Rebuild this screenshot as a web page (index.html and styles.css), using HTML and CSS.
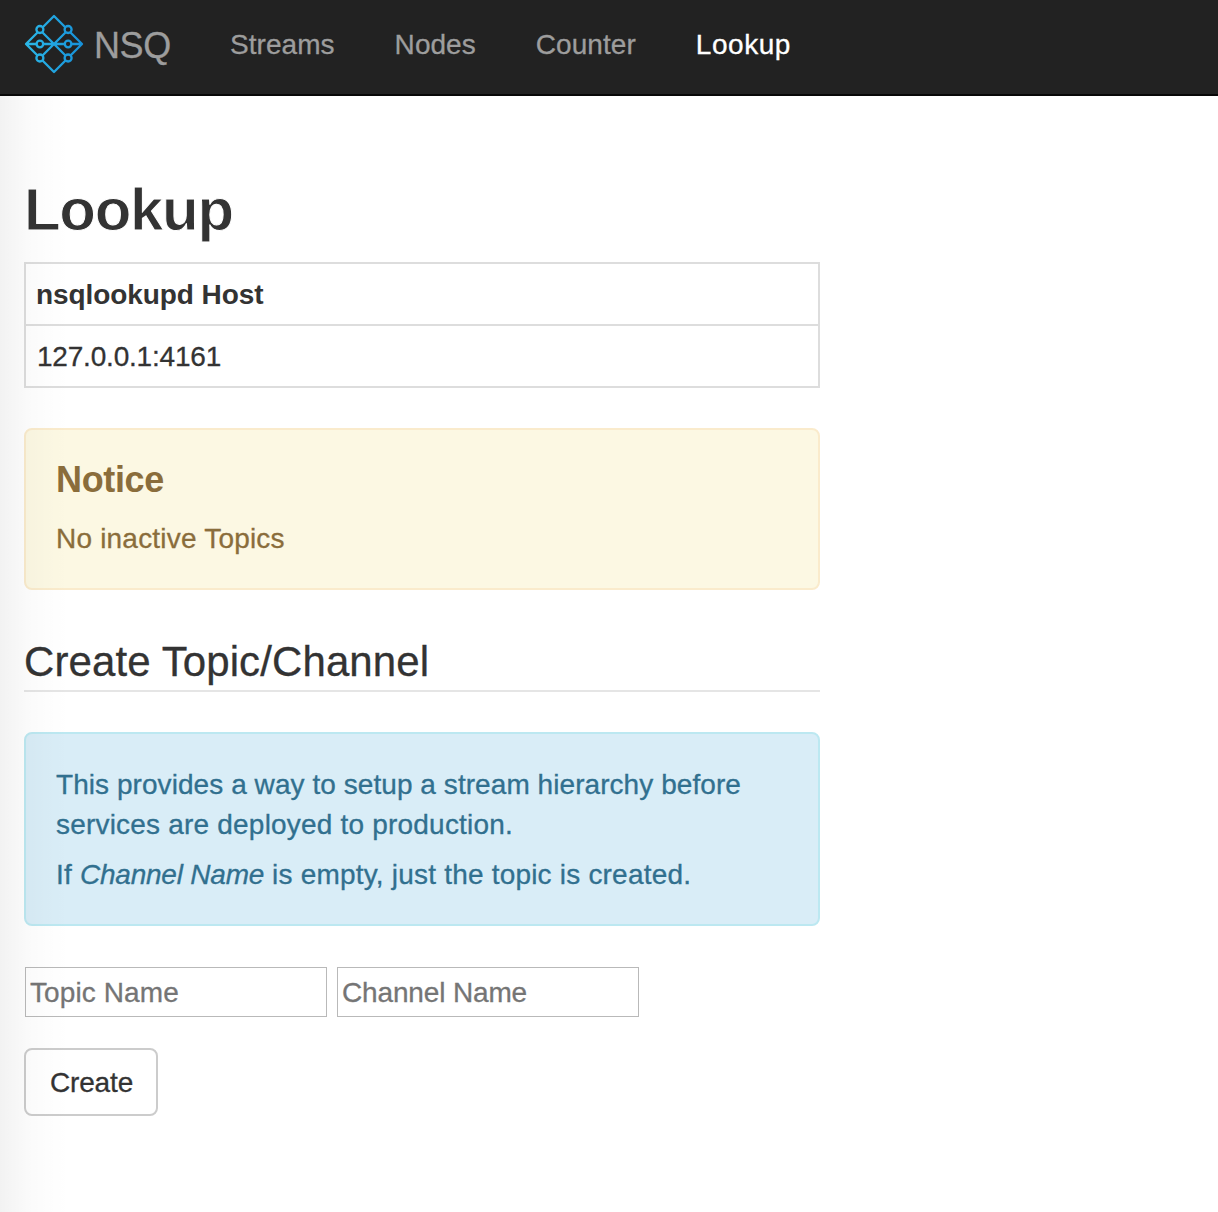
FILE: index.html
```html
<!DOCTYPE html>
<html lang="en">
<head>
<meta charset="utf-8">
<title>NSQ Lookup</title>
<link rel="stylesheet" href="styles.css">
</head>
<body>
<nav class="navbar">
  <a class="brand">
    <svg class="logo" viewBox="0 0 60 60" fill="none" stroke="url(#logo-blue)" stroke-width="2.3">
      <defs>
        <linearGradient id="logo-blue" gradientUnits="userSpaceOnUse" x1="0" y1="30" x2="60" y2="30">
          <stop offset="0" stop-color="#2cb9e8"/>
          <stop offset="1" stop-color="#168fd8"/>
        </linearGradient>
      </defs>
      <path d="M30 2 58 30 30 58 2 30ZM15.8 15.8 44.2 44.2M44.2 15.8 15.8 44.2M2 30.01 58 29.99" stroke-linejoin="round"/>
      <g fill="#222">
        <circle cx="15.9" cy="15.5" r="3.5"/>
        <circle cx="44.1" cy="15.5" r="3.5"/>
        <circle cx="15.9" cy="30" r="3.3"/>
        <circle cx="44.1" cy="30" r="3.3"/>
        <circle cx="15.9" cy="44" r="3.5"/>
        <circle cx="44.1" cy="44" r="3.5"/>
      </g>
    </svg>
    <span class="brand-name">NSQ</span>
  </a>
  <a class="nav-link">Streams</a>
  <a class="nav-link">Nodes</a>
  <a class="nav-link">Counter</a>
  <a class="nav-link active">Lookup</a>
</nav>
<main class="content">
  <h1 class="title">Lookup</h1>
  <table class="hosts">
    <tr><th>nsqlookupd Host</th></tr>
    <tr><td>127.0.0.1:4161</td></tr>
  </table>
  <div class="alert warning">
    <h4 class="alert-title">Notice</h4>
    <p>No inactive Topics</p>
  </div>
  <form class="create">
    <h2 class="legend">Create Topic/Channel</h2>
    <div class="alert info">
      <p>This provides a way to setup a stream hierarchy before <span class="loose">services are deployed to production.</span></p>
      <p class="loose">If <em>Channel Name</em> is empty, just the topic is created.</p>
    </div>
    <div class="fields">
      <input class="field" type="text" placeholder="Topic Name">
      <input class="field channel" type="text" placeholder="Channel Name">
    </div>
    <button class="button" type="button">Create</button>
  </form>
</main>
</body>
</html>
```
FILE: styles.css
```css
* { box-sizing: border-box; }
body {
  margin: 0;
  min-height: 1212px;
  position: relative;
  background: #fff;
  color: #333;
  font: 28px/40px "Liberation Sans", Arial, sans-serif;
  -webkit-text-stroke: .3px;
}
/* soft shade along the left edge, laid over the content */
body::after {
  content: "";
  position: absolute;
  left: 0;
  top: 96px;
  bottom: 0;
  width: 70px;
  background: linear-gradient(to right, rgba(0,0,0,.052), rgba(0,0,0,.02) 28px, rgba(0,0,0,.008) 48px, rgba(0,0,0,0));
  pointer-events: none;
}
.navbar {
  display: flex;
  align-items: flex-start;
  gap: 60px;
  height: 96px;
  padding: 14px 24px 0;
  background: #222;
  border-bottom: 2px solid #080808;
  color: #9d9d9d;
}
.brand { display: flex; gap: 10px; width: 146px; font-size: 36px; }
.logo { width: 60px; height: 60px; flex: none; }
.brand-name { padding-top: 12px; letter-spacing: -.4px; }
.nav-link { padding-top: 11px; letter-spacing: .05px; }
.active { color: #fff; letter-spacing: .55px; }
.content { width: 820px; padding: 81px 0 0 24px; }
h1, h2, h4, p { margin: 0; }
/* the page-coloured stroke trims the bold face to a medium weight */
.title {
  font-size: 60px;
  line-height: 66px;
  font-weight: 700;
  letter-spacing: -1.3px;
  -webkit-text-stroke: 1px #fff;
  margin-bottom: 19px;
}
.hosts { width: 100%; border-collapse: collapse; margin-bottom: 40px; }
.hosts th, .hosts td {
  height: 62px;
  padding: 11px 10px 9px;
  border: 2px solid #ddd;
  text-align: left;
}
.hosts th { letter-spacing: -.08px; -webkit-text-stroke: 0; }
.hosts td { padding-left: 11px; letter-spacing: -.2px; }
.alert { border: 2px solid; border-radius: 8px; padding: 31px 30px 29px; }
.warning {
  padding-top: 30px;
  background: #fcf8e3;
  border-color: #faebcc;
  color: #8a6d3b;
  letter-spacing: .2px;
  margin-bottom: 41px;
}
.alert-title {
  font-size: 36px;
  line-height: 40px;
  letter-spacing: -.35px;
  -webkit-text-stroke: 0;
  margin-bottom: 19px;
}
.legend {
  height: 61px;
  padding-top: 1px;
  font-size: 42px;
  line-height: 60px;
  font-weight: 400;
  letter-spacing: .1px;
  border-bottom: 2px solid #e5e5e5;
  margin-bottom: 40px;
}
.info {
  background: #d9edf7;
  border-color: #bce8f1;
  color: #31708f;
  letter-spacing: .06px;
  margin-bottom: 41px;
}
.info p + p { margin-top: 10px; }
.info .loose { letter-spacing: .2px; }
.info em { letter-spacing: -.22px; }
.fields { display: flex; gap: 10px; padding-left: 1px; margin-bottom: 31px; }
.field {
  width: 302px;
  height: 50px;
  padding: 2px 4px 0;
  border: 1px solid #b9b9b9;
  background: #fff;
  font: inherit;
  letter-spacing: .1px;
}
.channel { letter-spacing: -.15px; }
.field::placeholder { color: #757575; opacity: 1; }
.button {
  display: block;
  width: 134px;
  height: 68px;
  padding: 2px 0 0 1px;
  border: 2px solid #ccc;
  border-radius: 8px;
  background: #fff;
  color: #333;
  font: inherit;
  letter-spacing: -.15px;
}
```
